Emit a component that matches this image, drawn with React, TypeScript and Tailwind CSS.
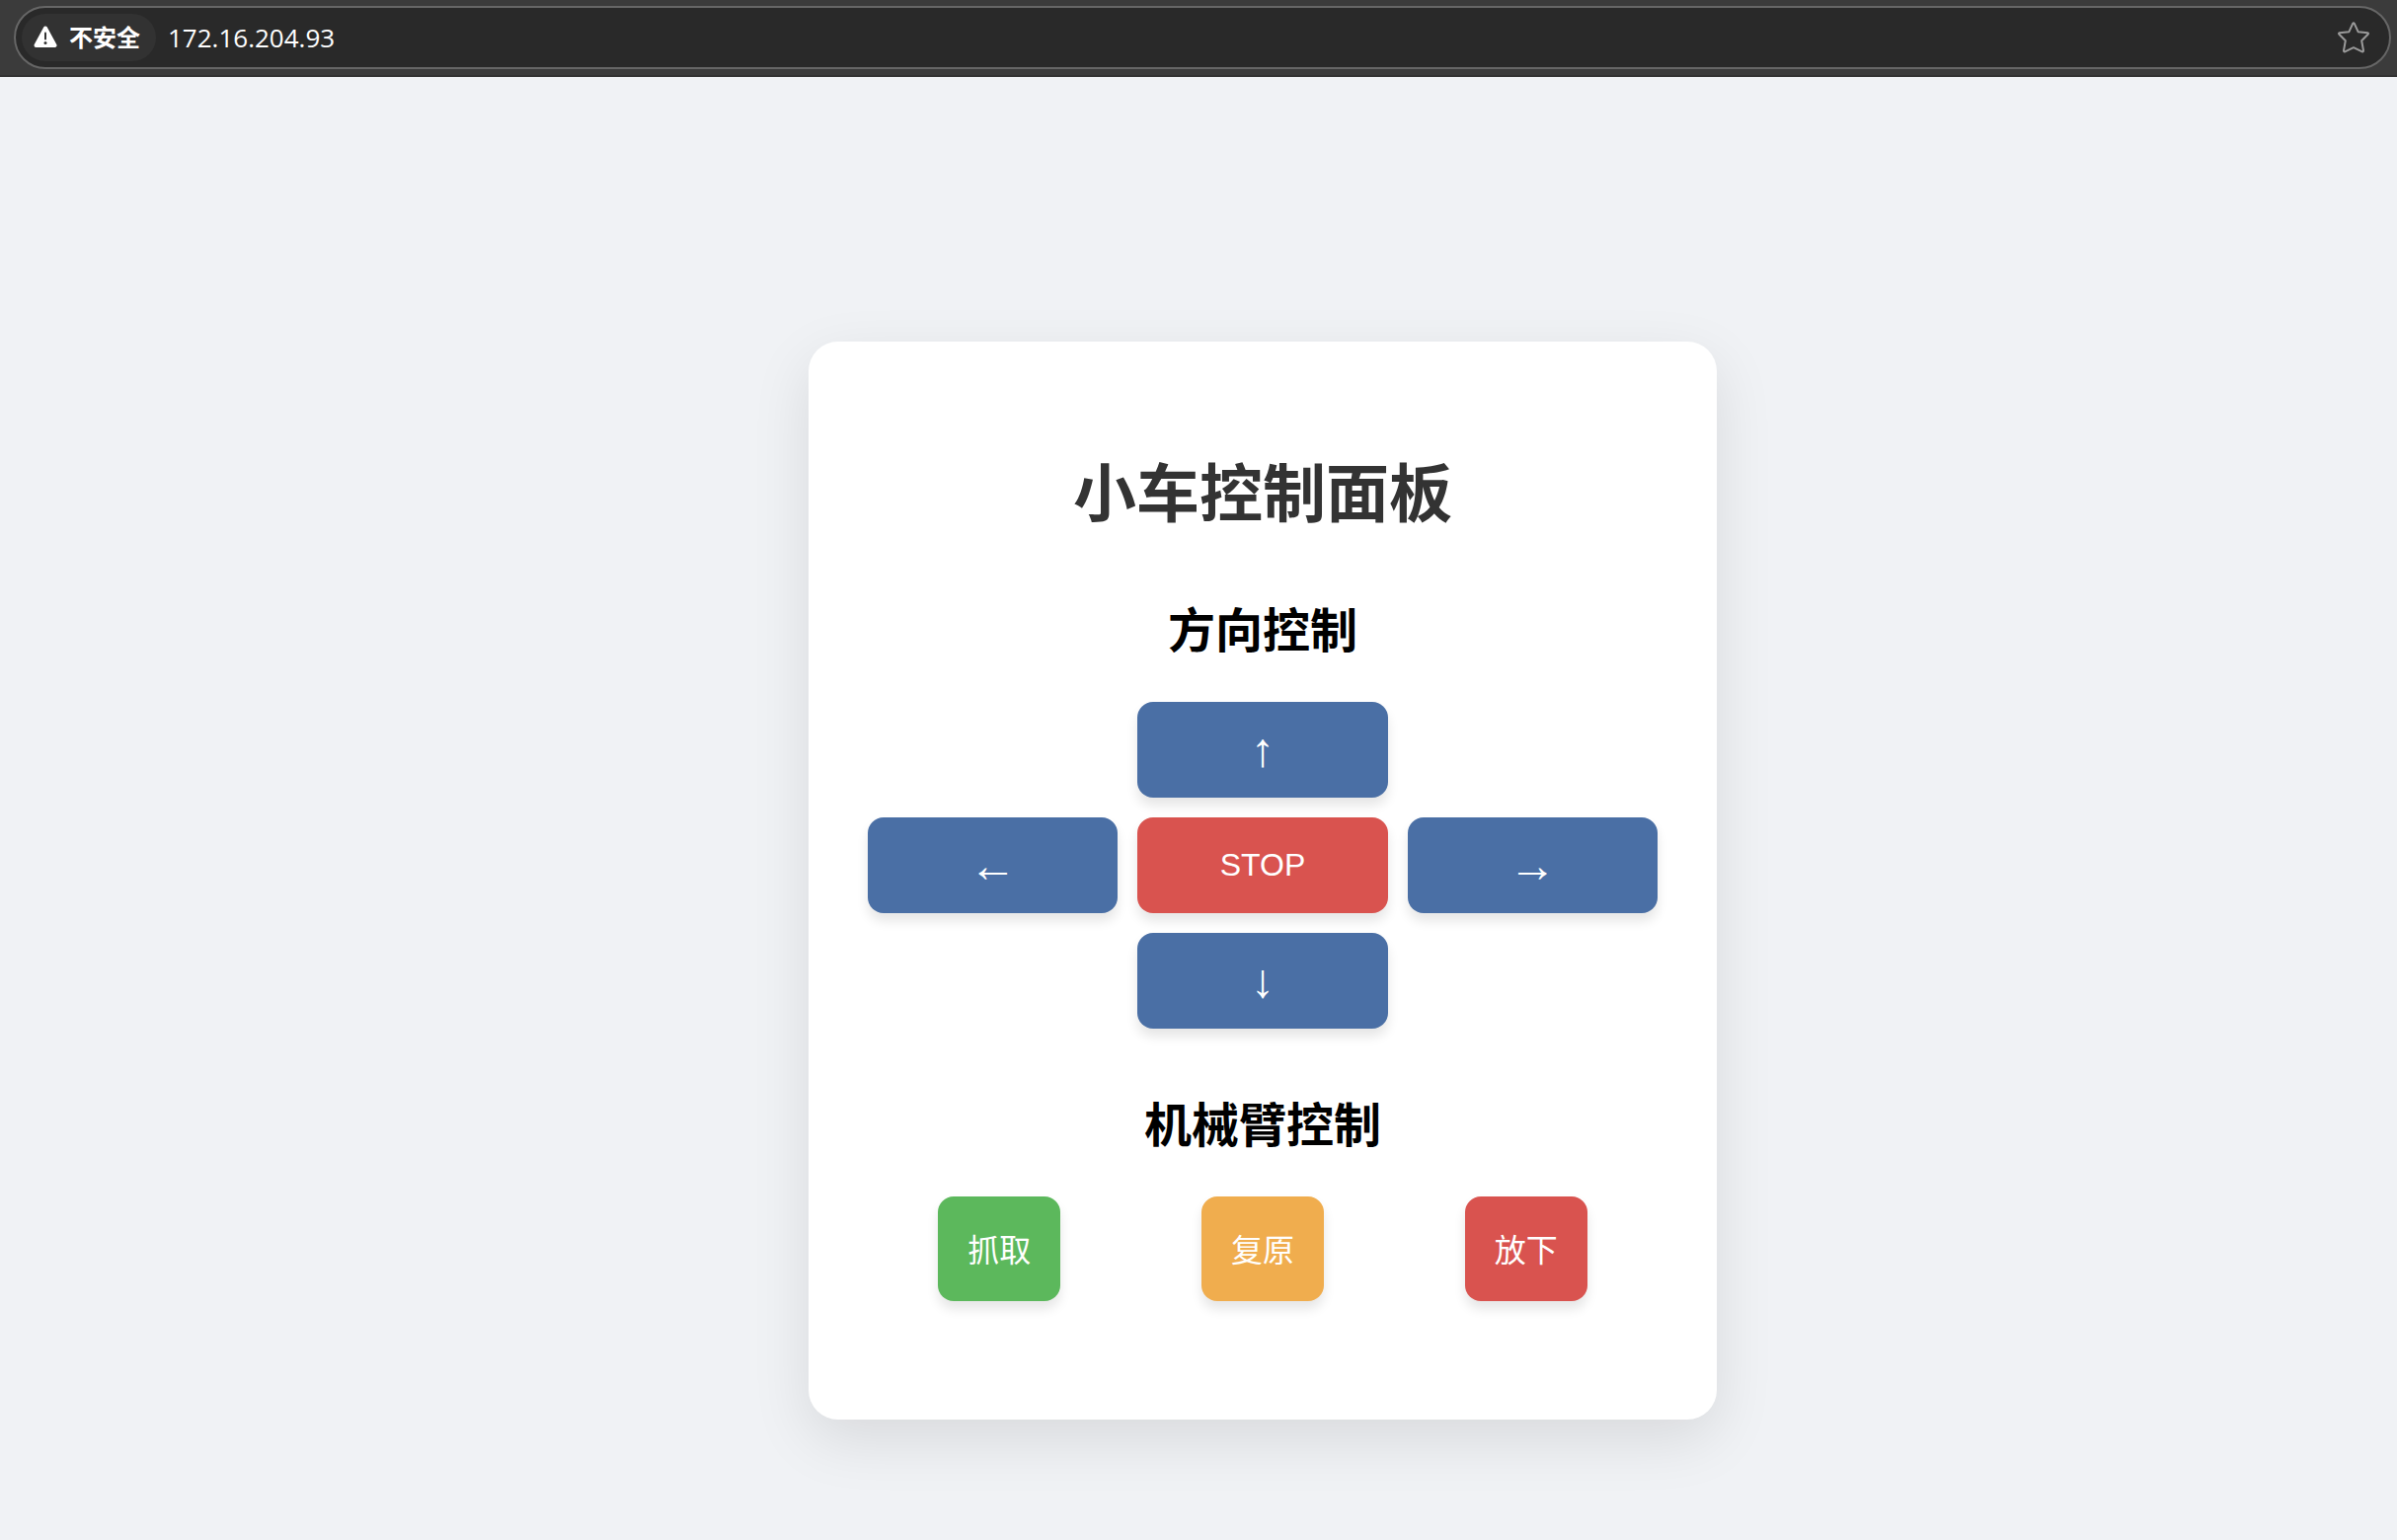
import type { ReactNode } from "react"

const directions = [
  { id: "up", label: "↑", name: "前进", className: "col-start-2 bg-[#4a6fa5] text-5xl" },
  { id: "left", label: "←", name: "左转", className: "col-start-1 bg-[#4a6fa5] text-5xl" },
  { id: "stop", label: "STOP", name: "STOP", className: "bg-[#d9534f] text-[32px]" },
  { id: "right", label: "→", name: "右转", className: "bg-[#4a6fa5] text-5xl" },
  { id: "down", label: "↓", name: "后退", className: "col-start-2 bg-[#4a6fa5] text-5xl" },
]

const armActions = [
  { id: "grab", label: "抓取", className: "bg-[#5cb85c]" },
  { id: "reset", label: "复原", className: "bg-[#f0ad4e]" },
  { id: "release", label: "放下", className: "bg-[#d9534f]" },
]

function AddressBar() {
  return (
    <header className="border-b-2 border-[#333333] bg-[#3b3b3b] pt-1.5 pr-1.5 pb-1.5 pl-3.5">
      <div className="flex h-16 items-center rounded-full border-2 border-[#666666] bg-[#292929] pr-5 pl-1.5 text-white">
        <button className="flex h-12 items-center gap-3 rounded-full bg-[#323232] pr-4 pb-0.5 pl-3 font-['Noto_Sans_CJK_SC',sans-serif] text-2xl leading-none font-bold">
          <svg className="h-6 w-6" viewBox="0 0 24 24" aria-hidden="true">
            <path
              d="M12 3.500 21.500 21H2.500Z"
              fill="currentColor"
              stroke="currentColor"
              strokeWidth="4"
              strokeLinejoin="round"
            />
            <path d="M12 8.500v6" stroke="#323232" strokeWidth="2" strokeLinecap="round" />
            <circle cx="12" cy="18.500" r="1.500" fill="#323232" />
          </svg>
          不安全
        </button>
        <input
          type="text"
          aria-label="地址"
          defaultValue="172.16.204.93"
          className="ml-3 min-w-0 flex-1 bg-transparent font-['Open_Sans',sans-serif] text-[26px] outline-none"
        />
        <button aria-label="收藏" className="text-[#9a9a9a]">
          <svg
            className="h-8 w-8"
            viewBox="0 0 32 32"
            fill="none"
            stroke="currentColor"
            strokeWidth="2"
            strokeLinecap="round"
            strokeLinejoin="round"
          >
            <path d="M15.200 1.800Q16 .6 16.800 1.800L20.600 10.200 30.200 11.300Q31.600 11.600 30.600 12.700L24.200 19.300 26 29.300Q26 30.800 24.700 30.300L16 26.200 7.300 30.300Q6 30.800 6 29.300L7.800 19.300 1.400 12.700Q.4 11.600 1.800 11.300L11.400 10.200Z" />
          </svg>
        </button>
      </div>
    </header>
  )
}

function SectionTitle({ children }: { children: ReactNode }) {
  return <h2 className="text-5xl leading-[70px] font-bold text-black">{children}</h2>
}

export default function App() {
  return (
    <div className="flex min-h-screen flex-col bg-[#f0f2f5] font-['Liberation_Sans','Noto_Sans_CJK_SC',sans-serif]">
      <AddressBar />
      <main className="flex flex-1 justify-center pt-[268px] pb-20 pl-[130px]">
        <div className="w-full max-w-[920px] self-start rounded-[30px] bg-white px-[60px] pt-[109px] pb-[120px] text-center shadow-[0_20px_60px_rgba(0,0,0,0.1)]">
          <h1 className="mb-[58px] text-[64px] leading-[92px] font-bold text-[#333333]">小车控制面板</h1>

          <section className="mb-16">
            <SectionTitle>方向控制</SectionTitle>
            <div className="mt-9 grid grid-cols-3 gap-5">
              {directions.map(({ id, label, name, className }) => (
                <button
                  key={id}
                  aria-label={name}
                  className={`rounded-2xl p-[30px] leading-[37px] text-white shadow-[0_8px_12px_rgba(0,0,0,0.1)] ${className}`}
                >
                  {label}
                </button>
              ))}
            </div>
          </section>

          <section>
            <SectionTitle>机械臂控制</SectionTitle>
            <div className="mt-9 flex justify-around">
              {armActions.map(({ id, label, className }) => (
                <button
                  key={id}
                  className={`rounded-2xl px-[30px] pt-8 pb-7 text-[32px] leading-[46px] text-white shadow-[0_8px_12px_rgba(0,0,0,0.1)] ${className}`}
                >
                  {label}
                </button>
              ))}
            </div>
          </section>
        </div>
      </main>
    </div>
  )
}
